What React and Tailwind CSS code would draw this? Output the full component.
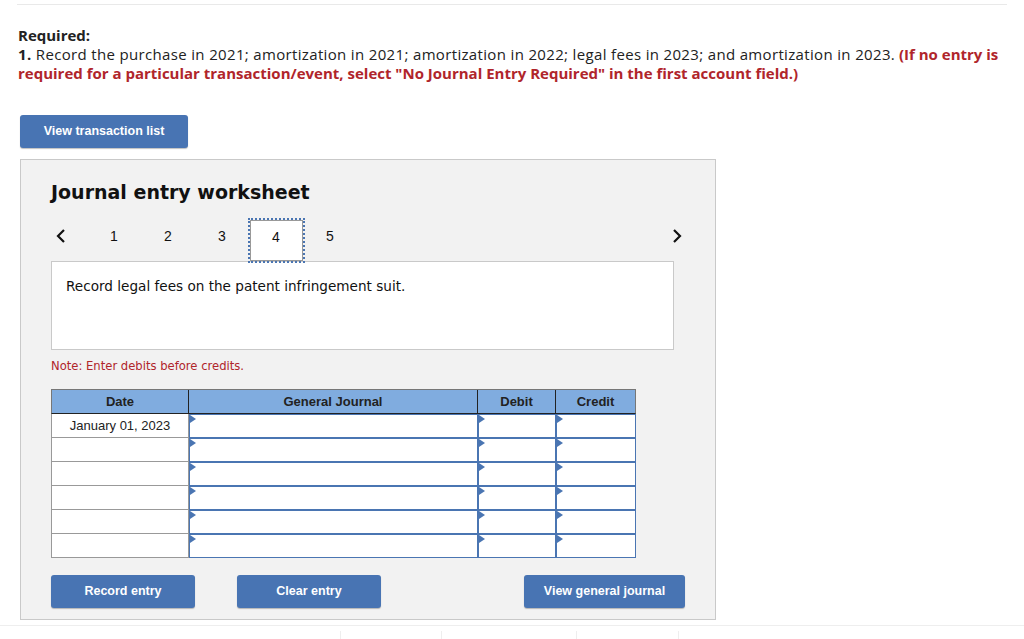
import React from 'react'

const tabs = ['1', '2', '3', '4', '5']
const rows = ['January 01, 2023', '', '', '', '', '']

function Chevron({ dir }) {
  return (
    <svg width="12" height="16" viewBox="0 0 12 16" className="block">
      {dir === 'left' ? (
        <polyline points="9,2 3,8 9,14" fill="none" stroke="#111" strokeWidth="2.2" />
      ) : (
        <polyline points="3,2 9,8 3,14" fill="none" stroke="#111" strokeWidth="2.2" />
      )}
    </svg>
  )
}

function InputCell({ width }) {
  return (
    <div className={`relative h-full border border-[#4a75b2] bg-white ${width}`}>
      <span className="absolute left-0 top-0 h-0 w-0 border-y-[4px] border-l-[6px] border-y-transparent border-l-[#4a75b2]" />
    </div>
  )
}

function BlueButton({ children, className }) {
  return (
    <button
      className={`h-[33px] rounded-[3px] bg-[#4874b3] text-[12.5px] font-bold text-white shadow-[0_1px_1px_rgba(0,0,0,0.25)] ${className}`}
      style={{ fontFamily: '"Liberation Sans", Arial, sans-serif' }}
    >
      {children}
    </button>
  )
}

export default function App() {
  return (
    <div className="min-h-screen bg-white">
      <div className="px-[17px] pt-[4px]">
        <div className="border-t border-[#e9e9e9]" />
      </div>

      <div className="px-[18px] pt-[21px] text-[15px] leading-[19px] text-[#222]" style={{ fontFamily: '"Open Sans", Lato, sans-serif' }}>
        <p className="font-bold">Required:</p>
        <p>
          <span className="tracking-[0.34px]">
            <span className="font-bold">1.</span> Record the purchase in 2021; amortization in 2021; amortization in 2022; legal fees in 2023; and amortization in 2023.
          </span>{' '}
          <span className="font-bold text-[#b0252b]">
            (If no entry is required for a particular transaction/event, select "No Journal Entry Required" in the first account field.)
          </span>
        </p>
      </div>

      <div className="px-[20px] pt-[32px]">
        <BlueButton className="w-[168px]">View transaction list</BlueButton>
      </div>

      <div className="ml-[20px] mt-[11px] w-[696px] border border-[#c9c9c9] bg-[#f2f2f2] pb-[11px] pl-[30px] pt-[20px]" style={{ fontFamily: '"DejaVu Sans", Verdana, sans-serif' }}>
        <h2 className="text-[19px] font-bold leading-[24px] text-[#111]">Journal entry worksheet</h2>

        <div className="mt-[14px] flex h-[43px] w-[634px] items-start">
          <div className="flex h-[36px] w-[36px] items-center pl-[4px]">
            <Chevron dir="left" />
          </div>
          {tabs.map((t) =>
            t === '4' ? (
              <div key={t} className="relative z-10 mx-[0.5px] mt-[2px] h-[41px] w-[53px] border border-[#999] bg-white text-center text-[14px] leading-[32px] text-[#111] outline-2 outline-dotted outline-[#4a75b2]" style={{ fontFamily: '"Liberation Sans", Arial, sans-serif' }}>
                {t}
              </div>
            ) : (
              <div key={t} className="h-[36px] w-[54px] text-center text-[14px] leading-[36px] text-[#111]" style={{ fontFamily: '"Liberation Sans", Arial, sans-serif' }}>
                {t}
              </div>
            )
          )}
          <div className="ml-auto mr-[2px] flex h-[36px] items-center">
            <Chevron dir="right" />
          </div>
        </div>

        <div className="h-[89px] w-[623px] border border-[#c9c9c9] bg-white pl-[14px] pt-[15px] text-[13.6px] leading-[18px] text-[#111]">
          Record legal fees on the patent infringement suit.
        </div>

        <p className="mt-[8px] text-[11.6px] leading-[16px] text-[#b0252b]">Note: Enter debits before credits.</p>

        <div className="mt-[15px] w-[585px]" style={{ fontFamily: '"Liberation Sans", Arial, sans-serif' }}>
          <div className="flex h-[25px] border border-[#777] border-b-[#222] bg-[#80acdf] text-[13px] font-bold text-[#222]">
            <div className="flex w-[137px] items-center justify-center border-r border-[#222]">Date</div>
            <div className="flex w-[289px] items-center justify-center border-r border-[#222]">General Journal</div>
            <div className="flex w-[78px] items-center justify-center border-r border-[#222]">Debit</div>
            <div className="flex flex-1 items-center justify-center">Credit</div>
          </div>
          {rows.map((d, i) => (
            <div key={i} className="flex h-[24px]">
              <div className="flex w-[138px] items-center justify-center border-b border-l border-r border-[#999] bg-white text-[13px] text-[#222]">
                {d}
              </div>
              <InputCell width="w-[289px]" />
              <InputCell width="w-[78px]" />
              <InputCell width="w-[80px]" />
            </div>
          ))}
        </div>

        <div className="mt-[17px] flex w-[634px]">
          <BlueButton className="w-[144px]">Record entry</BlueButton>
          <BlueButton className="ml-[42px] w-[144px]">Clear entry</BlueButton>
          <BlueButton className="ml-auto w-[161px]">View general journal</BlueButton>
        </div>
      </div>

      <div className="mt-[5px] border-t border-[#eeeeee]" />
      <div className="mt-[5px] flex h-[20px]">
        <div className="w-[340px]" />
        <div className="w-[101px] border-l border-[#eeeeee]" />
        <div className="w-[135px] border-l border-[#eeeeee]" />
        <div className="w-[102px] border-l border-[#eeeeee]" />
        <div className="border-l border-[#eeeeee]" />
      </div>
    </div>
  )
}
